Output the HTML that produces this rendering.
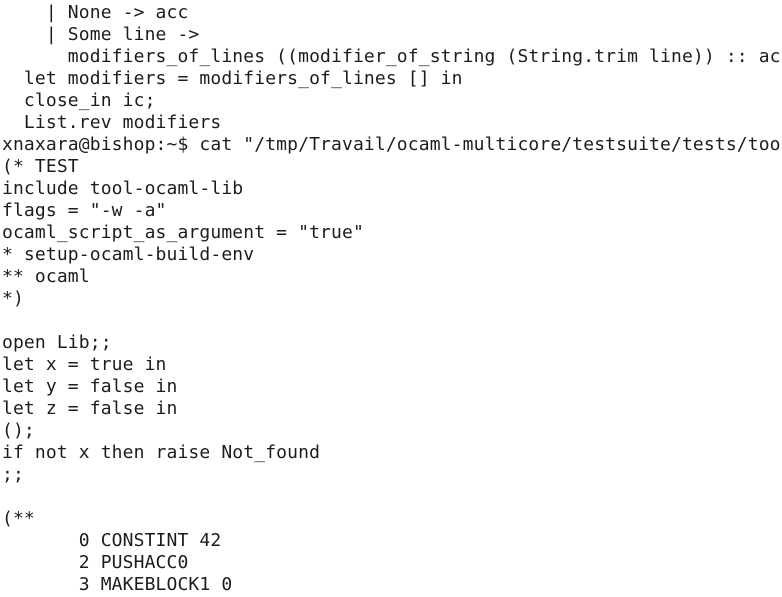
<!DOCTYPE html>
<html><head><meta charset="utf-8"><style>
html,body{margin:0;padding:0;background:#fff;width:782px;height:597px;overflow:hidden}
pre{margin:0;padding:2px 0 0 2px;font-family:"DejaVu Sans Mono","Liberation Mono",monospace;font-size:18px;letter-spacing:0.13px;line-height:22px;color:#1c1c1c;white-space:pre}
</style></head><body><pre>    | None -&gt; acc
    | Some line -&gt;
      modifiers_of_lines ((modifier_of_string (String.trim line)) :: acc
  let modifiers = modifiers_of_lines [] in
  close_in ic;
  List.rev modifiers
xnaxara@bishop:~$ cat "/tmp/Travail/ocaml-multicore/testsuite/tests/too
(* TEST
include tool-ocaml-lib
flags = "-w -a"
ocaml_script_as_argument = "true"
* setup-ocaml-build-env
** ocaml
*)

open Lib;;
let x = true in
let y = false in
let z = false in
();
if not x then raise Not_found
;;

(**
       0 CONSTINT 42
       2 PUSHACC0
       3 MAKEBLOCK1 0
</pre></body></html>
